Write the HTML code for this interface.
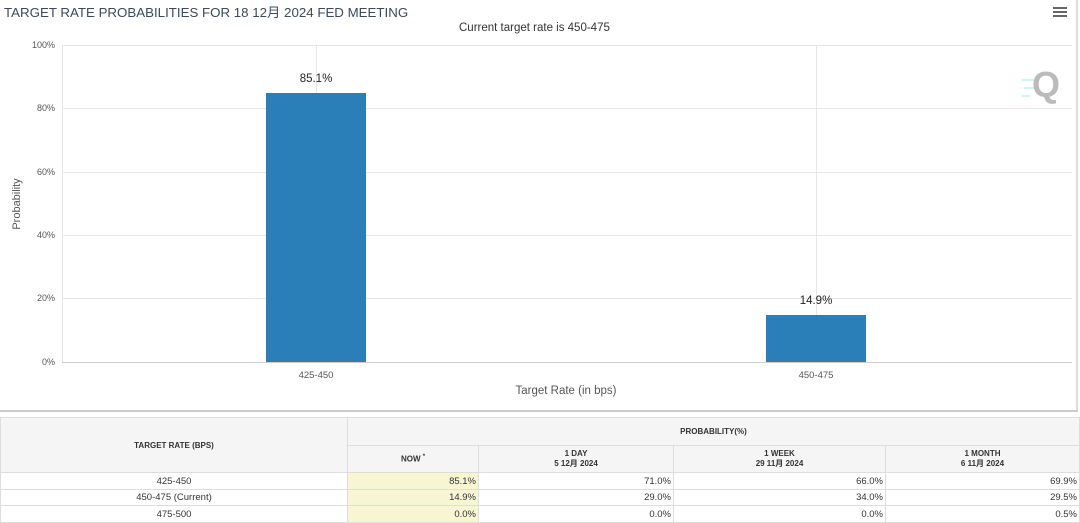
<!DOCTYPE html><html><head><meta charset="utf-8"><style>
body{margin:0;width:1080px;height:522px;overflow:hidden;background:#fff;font-family:"Liberation Sans","Noto Sans CJK SC",sans-serif;position:relative}
.a{position:absolute}
table{position:absolute;left:0;top:417px;width:1080px;border-collapse:collapse;table-layout:fixed;font-size:9.5px;color:#333}
td{border:1px solid #ddd;padding:0 2px}
th{border:1px solid #ddd;background:#f5f5f5;font-weight:bold;font-size:8px;color:#333}
.r{text-align:right}.c{text-align:center}.y{background:#f8f6d2}
</style></head><body>
<div class="a" style="left:4px;top:2px;font-size:13.3px;color:#3a4a5a;letter-spacing:0">TARGET RATE PROBABILITIES FOR 18 12月 2024 FED MEETING</div>
<div class="a" style="left:459px;top:22px;font-size:11.5px;color:#333">Current target rate is 450-475</div>
<div class="a" style="left:1053px;top:7px;width:14px;height:2px;background:#666;box-shadow:0 4px 0 #666,0 8px 0 #666"></div>
<div class="a" style="left:1076px;top:0;width:2px;height:411px;background:#ddd"></div>
<div class="a" style="left:0;top:410px;width:1078px;height:2px;background:#ccc"></div>
<svg class="a" style="left:0;top:0" width="1076" height="410">
<g stroke="#e6e6e6" stroke-width="1">
<line x1="62" x2="1072" y1="45.5" y2="45.5"/><line x1="62" x2="1072" y1="108.5" y2="108.5"/><line x1="62" x2="1072" y1="172.5" y2="172.5"/><line x1="62" x2="1072" y1="235.5" y2="235.5"/><line x1="62" x2="1072" y1="298.5" y2="298.5"/>
<line x1="316.5" x2="316.5" y1="45" y2="362"/><line x1="816.5" x2="816.5" y1="45" y2="362"/><line x1="62.5" x2="62.5" y1="45" y2="362"/>
</g>
<line x1="62" x2="1072" y1="362.5" y2="362.5" stroke="#ccc"/>
<rect x="266" y="93" width="100" height="269" fill="#2a7fb8"/>
<rect x="766" y="315" width="100" height="47" fill="#2a7fb8"/>
<g font-size="9" fill="#555" text-anchor="end" font-family="Liberation Sans,sans-serif">
<text x="55" y="48">100%</text><text x="55" y="111">80%</text><text x="55" y="175">60%</text><text x="55" y="238">40%</text><text x="55" y="301">20%</text><text x="55" y="365">0%</text></g>
<g font-size="11.5" fill="#222" text-anchor="middle" font-family="Liberation Sans,sans-serif">
<text x="316" y="82">85.1%</text><text x="816" y="304">14.9%</text></g>
<g font-size="9.5" fill="#555" text-anchor="middle" font-family="Liberation Sans,sans-serif">
<text x="316" y="378">425-450</text><text x="816" y="378">450-475</text></g>
<text x="566" y="394" font-size="11.5" fill="#555" text-anchor="middle" font-family="Liberation Sans,sans-serif">Target Rate (in bps)</text>
<text transform="translate(20,204) rotate(-90)" font-size="11" fill="#555" text-anchor="middle" font-family="Liberation Sans,sans-serif">Probability</text>
<text x="1032" y="97" font-size="36" font-weight="bold" fill="#bbb" font-family="Liberation Sans,sans-serif">Q</text>
<g stroke="#9ee" stroke-width="1"><line x1="1022" y1="80" x2="1034" y2="80"/><line x1="1024" y1="88" x2="1034" y2="88"/><line x1="1022" y1="96" x2="1030" y2="96"/></g>
</svg>
<table>
<colgroup><col style="width:347px"><col style="width:131px"><col style="width:195px"><col style="width:212px"><col></colgroup>
<tr style="height:28px"><th rowspan="2">TARGET RATE (BPS)</th><th colspan="4">PROBABILITY(%)</th></tr>
<tr style="height:27px"><th>NOW <sup style="font-size:6px">*</sup></th><th>1 DAY<br>5 12月 2024</th><th>1 WEEK<br>29 11月 2024</th><th>1 MONTH<br>6 11月 2024</th></tr>
<tr style="height:17px"><td class="c">425-450</td><td class="r y">85.1%</td><td class="r">71.0%</td><td class="r">66.0%</td><td class="r">69.9%</td></tr>
<tr style="height:16px"><td class="c">450-475 (Current)</td><td class="r y">14.9%</td><td class="r">29.0%</td><td class="r">34.0%</td><td class="r">29.5%</td></tr>
<tr style="height:17px"><td class="c">475-500</td><td class="r y">0.0%</td><td class="r">0.0%</td><td class="r">0.0%</td><td class="r">0.5%</td></tr>
</table>
</body></html>
